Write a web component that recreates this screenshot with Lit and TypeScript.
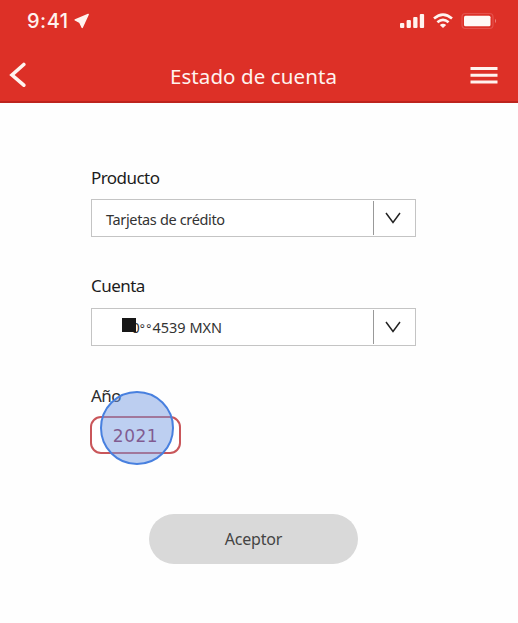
import { LitElement, html, css, svg } from "lit";
import { customElement, property } from "lit/decorators.js";

@customElement("select-field")
class SelectField extends LitElement {
  @property() label = "";
  @property() value = "";
  @property({ type: Boolean }) masked = false;

  static styles = css`
    :host { display: block; height: 108.5px; }
    .label { height: 24px; line-height: 22px; font-size: 17px; letter-spacing: -0.55px; color: #1c1c1c; white-space: nowrap; }
    .box { box-sizing: border-box; height: 38px; margin-top: 8.5px; border: 1px solid #c4c4c4; display: flex; align-items: center; background: #fff; }
    .value { flex: 1; display: flex; align-items: center; padding-left: 14px; font-size: 14.5px; letter-spacing: -0.35px; color: #333; white-space: nowrap; line-height: 20px; padding-top: 2px; }
    .masked { padding-left: 30px; letter-spacing: 0; }
    .redaction { width: 14px; height: 14px; background: #171717; margin: -6px -4.5px 0 0; position: relative; z-index: 1; }
    .stars { font-size: 12px; letter-spacing: 1.2px; }
    .toggle { box-sizing: border-box; width: 42px; height: 34px; border-left: 1px solid #999; display: flex; align-items: center; padding-left: 11px; }
    svg { display: block; }
  `;

  render() {
    return html`
      <div class="label">${this.label}</div>
      <div class="box">
        <div class="value ${this.masked ? "masked" : ""}">
          ${this.masked
            ? html`<span class="redaction"></span><span>0<span class="stars">°°</span>${this.value}</span>`
            : html`<span>${this.value}</span>`}
        </div>
        <div class="toggle">
          <svg width="16" height="12" viewBox="0 0 16 12" fill="none" stroke="#222" stroke-width="1.5">
            <path d="M1 1 L8 10.4 L15 1" />
          </svg>
        </div>
      </div>
    `;
  }
}

@customElement("app-root")
class AppRoot extends LitElement {
  static styles = css`
    :host { display: block; width: 518px; height: 623px; overflow: hidden; background: #fefefe; font-family: "Noto Sans", sans-serif; }
    header { box-sizing: border-box; height: 102.5px; background: #dd3027; border-bottom: 2px solid #bd241e; color: #fff3ef; }
    .status { height: 42px; display: flex; align-items: center; justify-content: space-between; padding: 0 21px 0 27px; }
    .left, .right { display: flex; align-items: center; }
    .time { font-family: Inter, sans-serif; font-size: 20px; font-weight: 500; letter-spacing: 0.5px; line-height: 42px; }
    .arrow { margin-left: 5px; }
    .wifi { margin-left: 8px; }
    .battery { margin-left: 8px; }
    svg { display: block; }
    .nav { height: 58px; display: grid; grid-template-columns: 60px 1fr 60px; align-items: center; padding-top: 4px; }
    .back { margin-left: 8px; }
    .title { text-align: center; font-size: 20.5px; line-height: 28px; letter-spacing: 0.1px; padding: 2px 11px 0 0; white-space: nowrap; }
    .menu { justify-self: end; margin-right: 20px; }
    main { padding: 64px 102px 0 91px; }
    .year-label { height: 24px; line-height: 23px; font-size: 17px; letter-spacing: -0.6px; color: #2c2c2c; }
    .year-row { position: relative; margin: 8.5px 0 0 -1px; width: 91px; height: 38px; }
    .year { box-sizing: border-box; width: 91px; height: 38px; border: 2px solid #c9565a; border-radius: 11px; display: flex; align-items: center; justify-content: center; padding-top: 1px; font-family: "DejaVu Sans", sans-serif; font-size: 17px; letter-spacing: 0.5px; color: #8d1f48; background: #fff; }
    .touch { position: absolute; left: 10px; top: -25px; box-sizing: border-box; width: 74px; height: 74px; border-radius: 50%; border: 2px solid #4880df; background: rgba(118, 155, 225, 0.48); }
    .accept { display: flex; align-items: center; justify-content: center; width: 209px; height: 50px; margin: 60px 0 0 58px; border: 0; padding: 0; border-radius: 25px; background: #d9d9d9; color: #444; font-family: inherit; font-size: 16px; letter-spacing: -0.2px; }
  `;

  render() {
    return html`
      <header>
        <div class="status">
          <div class="left">
            <span class="time">9:41</span>
            <svg class="arrow" width="16" height="16" viewBox="0 0 16 16" fill="#fff3ef" stroke="#fff3ef" stroke-width="1.4" stroke-linejoin="round"><path d="M14.2 1.5 L1.2 7 L5.8 9.4 L8.2 14.4 Z" /></svg>
          </div>
          <div class="right">
            <svg width="25" height="16" viewBox="0 0 25 16" fill="#fff3ef">
              ${[5, 8, 11, 14].map((h, i) => svg`<rect x=${i * 6.6} y=${15 - h} width="4.3" height=${h} rx="1" />`)}
            </svg>
            <svg class="wifi" width="20" height="16" viewBox="0 0 20 16" fill="none" stroke="#fff3ef" stroke-width="2.6">
              <path d="M1 5.6 Q10 -2.3 19 5.6" />
              <path d="M4.4 9.3 Q10 4.4 15.6 9.3" />
              <path d="M10 15 L6.8 12 Q10 9.6 13.2 12 Z" fill="#fff3ef" stroke="none" />
            </svg>
            <svg class="battery" width="36" height="18" viewBox="0 0 36 18">
              <rect x="1" y="1.5" width="31" height="15" rx="3.5" fill="none" stroke="#e5504b" stroke-width="1.2" />
              <rect x="3" y="3.7" width="26.5" height="10.6" rx="1.5" fill="#fff8f6" />
              <path d="M34 6.8 Q36 9 34 11.2 Z" fill="#ee8580" />
            </svg>
          </div>
        </div>
        <div class="nav">
          <svg class="back" width="20" height="26" viewBox="0 0 20 26" fill="none" stroke="#fff3ef" stroke-width="3.6" stroke-linecap="round" stroke-linejoin="miter"><path d="M15.8 2.5 L4 13 L15.8 23.2" /></svg>
          <div class="title">Estado de cuenta</div>
          <svg class="menu" width="28" height="18" viewBox="0 0 28 18" stroke="#fff3ef" stroke-width="3"><path d="M0.5 2.5H27.5 M0.5 9.3H27.5 M0.5 16H27.5" /></svg>
        </div>
      </header>
      <main>
        <select-field label="Producto" value="Tarjetas de crédito"></select-field>
        <select-field label="Cuenta" value="4539 MXN" masked></select-field>
        <div class="year-label">Año</div>
        <div class="year-row">
          <div class="year">2021</div>
          <div class="touch"></div>
        </div>
        <button class="accept">Aceptor</button>
      </main>
    `;
  }
}
